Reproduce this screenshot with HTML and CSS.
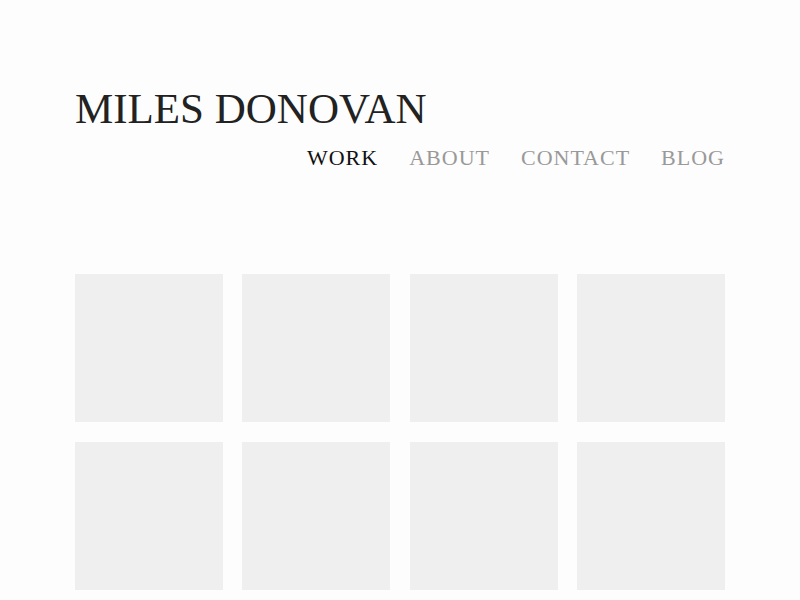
FILE: index.html
```html
<!DOCTYPE html>
<html>
<head>
<meta charset="utf-8">
<link rel="stylesheet" href="styles.css">
</head>
<body>
<div class="page">
  <header class="header">
    <h1 class="title">MILES DONOVAN</h1>
    <nav class="nav">
      <a class="nav-item active">WORK</a>
      <a class="nav-item">ABOUT</a>
      <a class="nav-item">CONTACT</a>
      <a class="nav-item">BLOG</a>
    </nav>
  </header>
  <main class="grid">
    <div class="tile"></div>
    <div class="tile"></div>
    <div class="tile"></div>
    <div class="tile"></div>
    <div class="tile"></div>
    <div class="tile"></div>
    <div class="tile"></div>
    <div class="tile"></div>
  </main>
</div>
</body>
</html>
```
FILE: styles.css
```css
html, body {
  margin: 0;
  padding: 0;
  background: #fdfdfd;
  font-family: "Liberation Serif", "Times New Roman", serif;
  overflow: hidden;
}
.page {
  width: 650px;
  margin: 0 auto;
  padding-top: 84px;
}
.header {
  display: flex;
  flex-direction: column;
}
.title {
  margin: 0;
  font-weight: normal;
  font-size: 43px;
  line-height: 50px;
  color: #222;
}
.nav {
  display: flex;
  justify-content: flex-end;
  gap: 31px;
  margin-top: 11px;
}
.nav-item {
  font-size: 22px;
  line-height: 26px;
  letter-spacing: 1px;
  color: #999;
}
.nav-item.active {
  color: #111;
}
.grid {
  display: grid;
  grid-template-columns: repeat(4, 1fr);
  column-gap: 19.33px;
  row-gap: 20px;
  margin-top: 103px;
}
.tile {
  aspect-ratio: 1;
  background: #efefef;
}
```
